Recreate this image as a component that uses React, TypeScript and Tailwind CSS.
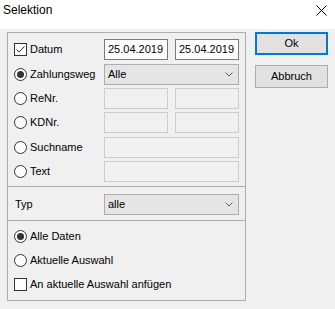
import React from "react";

function Radio({ checked = false }: { checked?: boolean }) {
  return (
    <span className="w-[13px] h-[13px] rounded-full border border-[#333333] bg-white flex items-center justify-center shrink-0">
      {checked && <span className="w-[7px] h-[7px] rounded-full bg-[#333333]" />}
    </span>
  );
}

function Check({ checked = false }: { checked?: boolean }) {
  return (
    <span className="w-[13px] h-[13px] border border-[#333333] bg-white flex items-center justify-center shrink-0">
      {checked && (
        <svg width="11" height="11" viewBox="0 0 11 11">
          <polyline points="1.5,5.5 4,8 9.5,2.5" fill="none" stroke="#333333" strokeWidth="1" />
        </svg>
      )}
    </span>
  );
}

function Chevron() {
  return (
    <svg width="8" height="5" viewBox="0 0 8 5" className="shrink-0">
      <polyline points="0.5,0.5 4,4 7.5,0.5" fill="none" stroke="#606060" strokeWidth="1" />
    </svg>
  );
}

function Combo({ value }: { value: string }) {
  return (
    <div className="w-[135px] h-[21px] border border-[#adadad] bg-[#e5e5e5] flex items-center justify-between pl-[3px] pr-[5px]">
      <span>{value}</span>
      <Chevron />
    </div>
  );
}

function DateBox({ value }: { value: string }) {
  return (
    <div className="w-[64px] h-[21px] border border-[#7a7a7a] bg-white flex items-center pl-[3px]">
      {value}
    </div>
  );
}

function EmptyBox({ wide = false }: { wide?: boolean }) {
  return (
    <div
      className={
        wide
          ? "w-[135px] h-[21px] border border-[#cccccc] bg-[#f0f0f0]"
          : "w-[64px] h-[21px] border border-[#cccccc] bg-[#f0f0f0]"
      }
    />
  );
}

function Label({ children }: { children: React.ReactNode }) {
  return <span className="ml-[3px] whitespace-nowrap">{children}</span>;
}

export default function App() {
  return (
    <div className="w-[335px] h-[309px] bg-[#f0f0f0] overflow-hidden text-[11px] leading-[13px] text-black font-['Liberation_Sans',Arial,sans-serif]">
      {/* title bar */}
      <div className="h-[29px] bg-white flex items-start justify-between">
        <span className="pl-[3px] pt-[3px] text-[12px] leading-[15px]">Selektion</span>
        <svg width="11" height="11" viewBox="0 0 11 11" className="mt-[5px] mr-[8px]">
          <path d="M0.5 0.5 L10.5 10.5 M10.5 0.5 L0.5 10.5" stroke="#000" strokeWidth="1" />
        </svg>
      </div>

      <div className="flex pl-[7px] pt-[3px]">
        {/* group panel */}
        <div className="w-[239px] h-[269px] border border-[#adadad] flex flex-col">
          <div className="flex flex-col px-[6px] pt-[6px]">
            <div className="h-[21px] flex items-center">
              <div className="w-[90px] flex items-center">
                <Check checked />
                <Label>Datum</Label>
              </div>
              <div className="flex gap-[7px]">
                <DateBox value="25.04.2019" />
                <DateBox value="25.04.2019" />
              </div>
            </div>
            <div className="h-[21px] mt-[4px] flex items-center">
              <div className="w-[90px] flex items-center">
                <Radio checked />
                <Label>Zahlungsweg</Label>
              </div>
              <Combo value="Alle" />
            </div>
            <div className="h-[21px] mt-[3px] flex items-center">
              <div className="w-[90px] flex items-center">
                <Radio />
                <Label>ReNr.</Label>
              </div>
              <div className="flex gap-[7px]">
                <EmptyBox />
                <EmptyBox />
              </div>
            </div>
            <div className="h-[21px] mt-[3px] flex items-center">
              <div className="w-[90px] flex items-center">
                <Radio />
                <Label>KDNr.</Label>
              </div>
              <div className="flex gap-[7px]">
                <EmptyBox />
                <EmptyBox />
              </div>
            </div>
            <div className="h-[21px] mt-[4px] flex items-center">
              <div className="w-[90px] flex items-center">
                <Radio />
                <Label>Suchname</Label>
              </div>
              <EmptyBox wide />
            </div>
            <div className="h-[21px] mt-[3px] flex items-center">
              <div className="w-[90px] flex items-center">
                <Radio />
                <Label>Text</Label>
              </div>
              <EmptyBox wide />
            </div>
          </div>

          <div className="h-px bg-[#adadad] mt-[4px]" />

          <div className="h-[21px] mt-[7px] px-[6px] flex items-center">
            <span className="w-[90px] pl-px">Typ</span>
            <Combo value="alle" />
          </div>

          <div className="h-px bg-[#adadad] mt-[5px]" />

          <div className="flex flex-col px-[6px]">
            <div className="h-[16px] mt-[7px] flex items-center">
              <Radio checked />
              <Label>Alle Daten</Label>
            </div>
            <div className="h-[16px] mt-[8px] flex items-center">
              <Radio />
              <Label>Aktuelle Auswahl</Label>
            </div>
            <div className="h-[16px] mt-[8px] flex items-center">
              <Check />
              <Label>An aktuelle Auswahl anfügen</Label>
            </div>
          </div>
        </div>

        {/* buttons */}
        <div className="ml-[9px] flex flex-col">
          <button className="w-[73px] h-[23px] border-2 border-[#0078d7] bg-[#e1e1e1] flex items-center justify-center">
            Ok
          </button>
          <button className="w-[73px] h-[23px] mt-[10px] border border-[#adadad] bg-[#e1e1e1] flex items-center justify-center">
            Abbruch
          </button>
        </div>
      </div>
    </div>
  );
}
